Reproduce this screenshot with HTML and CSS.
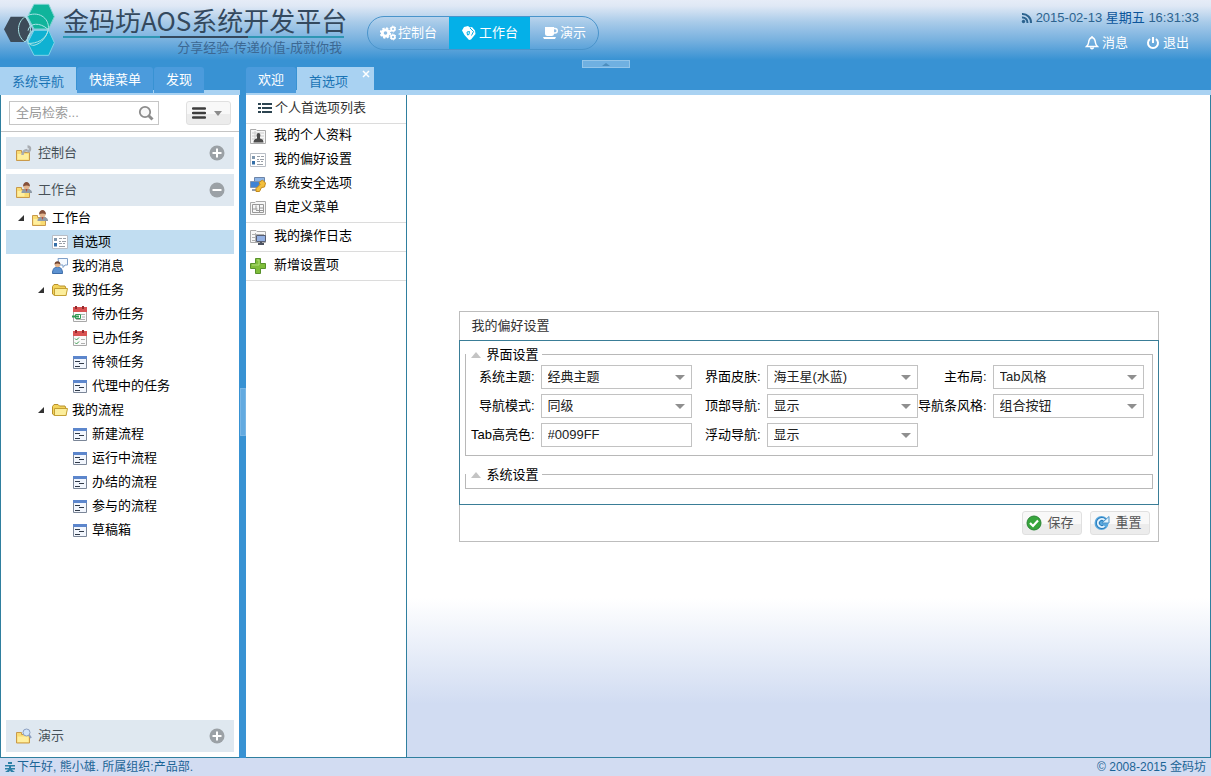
FILE: index.html
```html
<!DOCTYPE html>
<html lang="zh-CN">
<head>
<meta charset="utf-8">
<title>金码坊AOS系统开发平台</title>
<link rel="stylesheet" href="styles.css">
</head>
<body>
<svg class="sprite" aria-hidden="true">
  <symbol id="i-folder" viewBox="0 0 16 16">
    <path d="M.5 4.500 2 2.500H6l1.500 1.500H13L14 6.500 14 13.500H2.500L.5 12z" fill="#f3d35a" stroke="#b8912c"/>
    <path d="M2.500 6.500h13L14 13.500H2.500z" fill="#fcee9c" stroke="#c4a034"/>
  </symbol>
  <symbol id="i-box-wrench" viewBox="0 0 16 16">
    <path d="M.5 5.500h5v2h8v8H.5z" fill="#f9dc73" stroke="#c99a4b"/>
    <path d="M1.500 9h11v5.500h-11z" fill="#ffef9e"/>
    <path d="M6.500 10c0-3 2-5 5-5M11.500 1.500a2.500 2.500 0 1 1 0 5" fill="none" stroke="#a9adb2" stroke-width="2.500"/>
  </symbol>
  <symbol id="i-box-user" viewBox="0 0 16 16">
    <path d="M.5 5.500h5v2h8v8H.5z" fill="#f9dc73" stroke="#c99a4b"/>
    <path d="M1.500 9h7v5.500h-7z" fill="#ffef9e"/>
    <path d="M5.500 11c0-3 1.500-4 5-4s5.500 1 5.500 4z" fill="#8f9aa6"/>
    <circle cx="10.500" cy="4.500" r="3" fill="#e2b48c"/>
    <path d="M7 4.500c0-6 7-6 7 0-2-1.500-4.500-1.500-7 0z" fill="#85503a"/>
    <path d="m9.500 7 1 3 1-3z" fill="#b84e3c"/>
  </symbol>
  <symbol id="i-box-search" viewBox="0 0 16 16">
    <path d="M.5 4.500h5v2h8v8.500H.5z" fill="#f9dc73" stroke="#c99a4b"/>
    <path d="M1.500 8.500h11V14h-11z" fill="#ffef9e"/>
    <circle cx="10.500" cy="4.500" r="3.500" fill="#cfe4fa" stroke="#8c9fc0"/>
    <path d="m13 7 2 3" stroke="#8c9fc0" stroke-width="2"/>
  </symbol>
  <symbol id="i-prefs" viewBox="0 0 16 16">
    <path d="M.5 1.500h15v13H.5z" fill="#fff" stroke="#b9bec6"/>
    <path d="M2 4h3v3H2z" fill="#7e96ad"/><path d="M2 9h3v3.500H2z" fill="#356fa8"/>
    <path d="M7 4.500h3M11 4.500h3M7 7.500h2M10 7.500h4M7 9.500h3M11 9.500h2M7 12.500h6" stroke="#9aa0a8"/>
  </symbol>
  <symbol id="i-message" viewBox="0 0 16 16">
    <path d="M6 .5h9.500v6.500H13l-2 2.500V7H7z" fill="#f5faff" stroke="#7f9fc8"/>
    <path d="M.5 15.500c0-4 1.500-6.500 5-6.500s5 2.500 5 6.500z" fill="#5d92d1" stroke="#3c6ca8"/>
    <circle cx="5.500" cy="6.500" r="2.700" fill="#e5b58c"/>
    <path d="M2.500 6.500c0-4.500 6-4.500 6 0-2-1.500-4-1.500-6 0z" fill="#704431"/>
  </symbol>
  <symbol id="i-cal-todo" viewBox="0 0 16 16">
    <path d="M1.500 1.500h13v14h-13z" fill="#fafafa" stroke="#a8a8a8"/>
    <path d="M1 1h14v5H1z" fill="#d95353"/><path d="M4 0v3M11 0v3" stroke="#94292d" stroke-width="2"/>
    <path d="M9 8.500h4M10 11h3M4 13.500h9" stroke="#b0b0b0"/>
    <path d="M3.500 8.500h5v4h-5z" fill="#fff" stroke="#319a55"/><path d="M0 10.500h7" stroke="#319a55" stroke-width="2"/>
  </symbol>
  <symbol id="i-cal-done" viewBox="0 0 16 16">
    <path d="M1.500 1.500h13v14h-13z" fill="#fafafa" stroke="#a8a8a8"/>
    <path d="M1 1h14v5H1z" fill="#d95353"/><path d="M4 0v3M11 0v3" stroke="#94292d" stroke-width="2"/>
    <path d="m3 8.500 1.500 1.500L7 7.500M3 12.500 4.500 14 7 11.500" fill="none" stroke="#379a4c"/>
    <path d="M9 9.500h4M9 13.500h4" stroke="#b0b0b0"/>
  </symbol>
  <symbol id="i-form" viewBox="0 0 16 16">
    <path d="M1.500 2.500h13v12h-13z" fill="#f2f6fd" stroke="#7b8698"/>
    <path d="M1 2h14v3H1z" fill="#5c86cc"/>
    <path d="M3 7.500h5M7 9.500h5M3 12.500h5" stroke="#303a48"/>
  </symbol>
  <symbol id="i-profile" viewBox="0 0 16 16">
    <path d="M.5 1.500H6l1 1h8.500v13H.5z" fill="#f7f7f7" stroke="#aaa"/>
    <path d="M2 5h12M2 8h12M2 11h12M5 3v11" stroke="#ccc"/>
    <path d="M3.500 14.500c0-3 2-3.500 3.500-4V9c-2-5.500 5-5.500 3 0v1.500c2 .5 3.500 1 3.500 4z" fill="#4b4b4b"/>
  </symbol>
  <symbol id="i-security" viewBox="0 0 16 16">
    <path d="M4.500 1.500h10v8h-10z" fill="#8fb6e8" stroke="#6d84a6"/>
    <path d="M.5 5.500h9v6h-9z" fill="#3f83d4" stroke="#8094b0"/><path d="M2 14h6" stroke="#929cad" stroke-width="2"/>
    <path d="M6 15.500v-3l4-4-1-2 3.500-2.500 3 3-1 4-3 .5-2 4z" fill="#f3bf3c" stroke="#c38a1d"/>
  </symbol>
  <symbol id="i-custom" viewBox="0 0 16 16">
    <path d="M.5 2.500H5l1-1h9.500v13H.5z" fill="#f7f7f7" stroke="#aaa"/>
    <path d="M2.500 4.500h11v8h-11zM2.500 9h5M6 5.500v4M9.500 5v7M9.500 8h4M6 10.500h7" fill="none" stroke="#989898"/>
  </symbol>
  <symbol id="i-log" viewBox="0 0 16 16">
    <path d="M.5 1.500H6l1 1h8.500v11H.5z" fill="#f7f7f7" stroke="#aaa"/>
    <path d="M2 5.500h12M2 8.500h5M2 11.500h5M5.500 4v9" stroke="#b0b0b0"/>
    <path d="M6.500 6.500h9v6h-9z" fill="#93b0e2" stroke="#575d70"/><path d="M11 13v2M8 15h6" stroke="#4e5361" stroke-width="2"/>
  </symbol>
  <symbol id="i-add" viewBox="0 0 16 16">
    <path d="M5.500.5h5v5h5v5h-5v5h-5v-5h-5v-5h5z" fill="#7fbd3a" stroke="#58912b"/>
    <path d="M7 2h2v5H2" fill="none" stroke="#b2dd78"/>
  </symbol>
  <symbol id="i-plus" viewBox="0 0 16 16">
    <circle cx="8" cy="8" r="7.500" fill="#9ba1a6"/><path d="M8 3.500v9M3.500 8h9" stroke="#fff" stroke-width="2"/>
  </symbol>
  <symbol id="i-minus" viewBox="0 0 16 16">
    <circle cx="8" cy="8" r="7.500" fill="#9ba1a6"/><path d="M3.500 8h9" stroke="#fff" stroke-width="2"/>
  </symbol>
  <symbol id="i-expanded" viewBox="0 0 16 16"><path d="M8 5v6H2z" fill="#333"/></symbol>
  <symbol id="i-cogs" viewBox="0 0 16 16">
    <g fill="none" stroke="#fff">
      <circle cx="5.500" cy="8" r="3.200" stroke-width="2.800"/>
      <circle cx="5.500" cy="8" r="4.800" stroke-width="1.800" stroke-dasharray="2.200 1.570"/>
      <circle cx="13" cy="4" r="1.900" stroke-width="1.800"/>
      <circle cx="13" cy="4" r="2.900" stroke-width="1" stroke-dasharray="1.500 1.540"/>
      <circle cx="13" cy="12" r="1.900" stroke-width="1.800"/>
      <circle cx="13" cy="12" r="2.900" stroke-width="1" stroke-dasharray="1.500 1.540"/>
    </g>
  </symbol>
  <symbol id="i-tags" viewBox="0 0 16 16">
    <path d="M1 5.500 3 2l4-1 2 1.500 2-.5 3 3.500.5 3.500-4.500 5.500-2 .5-4.500-5z" fill="#fff"/>
    <path d="m6 7 2.500-.5L8 9.500 6.500 10zM9 3l3.500 3.500-2 4" fill="none" stroke="#04b0e8"/>
  </symbol>
  <symbol id="i-cup" viewBox="0 0 16 16">
    <path d="M3 2h9v6.500A2.500 2.500 0 0 1 9.500 11h-4A2.500 2.500 0 0 1 3 8.500zM1 12h13l-1 2H2z" fill="#fff"/>
    <path d="M12 3.500h1a2.200 2.200 0 0 1 0 4.500h-1" fill="none" stroke="#fff" stroke-width="1.500"/>
  </symbol>
  <symbol id="i-rss" viewBox="0 0 12 12">
    <circle cx="2.500" cy="9.500" r="1.700" fill="currentColor"/>
    <path d="M1 5.500A5 5 0 0 1 6.500 11M1 2a8.500 8.500 0 0 1 9 9" fill="none" stroke="currentColor" stroke-width="2"/>
  </symbol>
  <symbol id="i-bell" viewBox="0 0 14 14">
    <path d="M7 1.500C4 2 3.800 4.500 3.500 7 3.300 8.500 2.500 9.500 1.500 10.500h11C11.500 9.500 10.700 8.500 10.500 7 10.200 4.500 10 2 7 1.500zM7 0v2M5.500 11.500c.5 1.500 2.500 1.500 3 0" fill="none" stroke="currentColor" stroke-width="1.500"/>
  </symbol>
  <symbol id="i-power" viewBox="0 0 14 14">
    <path d="M4 3a5 5 0 1 0 6 0M7 1v6" fill="none" stroke="currentColor" stroke-width="2"/>
  </symbol>
  <symbol id="i-search" viewBox="0 0 16 16">
    <circle cx="7" cy="7" r="5.200" fill="#f8f8f8" stroke="#8c8c8c" stroke-width="1.800"/><path d="m10.500 10.500 4 4" stroke="#8c8c8c" stroke-width="3"/>
  </symbol>
  <symbol id="i-bars" viewBox="0 0 14 14"><path d="M1 2.500h12M1 7h12M1 11.500h12" stroke="#3d3d3d" stroke-width="2.500" stroke-linecap="round"/></symbol>
  <symbol id="i-list" viewBox="0 0 14 12">
    <path d="M0 2h3M0 6h3M0 10h3M4 2h10M4 6h10M4 10h10" stroke="#2c4450" stroke-width="2"/>
  </symbol>
  <symbol id="i-close" viewBox="0 0 8 8"><path d="m1 1 6 6M7 1 1 7" stroke="#fff" stroke-width="1.500"/></symbol>
  <symbol id="i-ok" viewBox="0 0 16 16">
    <circle cx="8" cy="8" r="7" fill="#37a53c" stroke="#2a8434"/><path d="M4 8l3 3 5-5.500" fill="none" stroke="#fff" stroke-width="2.200"/>
  </symbol>
  <symbol id="i-reset" viewBox="0 0 16 16">
    <circle cx="7.500" cy="8" r="7" fill="#5aa9de"/>
    <path d="M10.500 11a4 4 0 1 1 0-6" fill="none" stroke="#2a7dbd" stroke-width="4"/>
    <path d="M10.500 11a4 4 0 1 1 0-6" fill="none" stroke="#e3f4fe" stroke-width="2"/>
    <path d="M8 8h7V1.500z" fill="#e3f4fe" stroke="#4b94c9"/>
  </symbol>
  <symbol id="i-person" viewBox="0 0 12 12">
    <path d="M4 1h4v2H4zM1 4h10v1.500H7V7h4v1.500H7.500L11 11H7L6 9.500 5 11H1l3.500-2.500H1V7h4V5.500H1z" fill="#2b7fa5"/>
  </symbol>
</svg>

<div class="app">
  <header class="top">
    <div class="brand">
      <svg class="logo" viewBox="0 0 180 180" aria-hidden="true">
        <path d="M83 50l19-37h44l17 37-17 37h-44z" fill="#10b49b" stroke="#7ed3d2" stroke-width="3"/>
        <path d="M83 128l19-37h44l17 37-17 38h-44z" fill="#0fb1d2" stroke="#7ed3e8" stroke-width="3"/>
        <path d="M12 88l20-38h43l22 38-22 38H32z" fill="#3d4b59"/>
        <path d="M75 50c-26 18-26 58 0 76M75 50c22 22 22 54 0 76M83 46c40-14 66 14 62 42-4 30-36 44-62 42M100 92c-24 14-24 44 2 44 24-6 36-26 42-44M84 92c4-24 36-26 60-4" fill="none" stroke="#a9e4e6" stroke-width="3"/>
      </svg>
      <div class="brand-text">
        <h1 class="brand-title">金码坊AOS系统开发平台</h1>
        <p class="brand-sub">分享经验-传递价值-成就你我</p>
      </div>
    </div>
    <nav class="modes">
      <button class="mode" type="button"><svg class="icon"><use href="#i-cogs"/></svg>控制台</button>
      <button class="mode mode-on" type="button"><svg class="icon"><use href="#i-tags"/></svg>工作台</button>
      <button class="mode" type="button"><svg class="icon"><use href="#i-cup"/></svg>演示</button>
    </nav>
    <div class="session">
      <p class="clock"><svg class="icon-sm"><use href="#i-rss"/></svg><span>2015-02-13 <b class="weekday">星期五</b> 16:31:33</span></p>
      <div class="session-links">
        <a class="session-link" href="#messages"><svg class="icon-md"><use href="#i-bell"/></svg>消息</a>
        <a class="session-link" href="#logout"><svg class="icon-md"><use href="#i-power"/></svg>退出</a>
      </div>
    </div>
    <button class="fold-top" type="button" aria-label="收起顶部"></button>
  </header>

  <div class="main">
    <aside class="side">
      <div class="tabs">
        <button class="tab tab-on" type="button">系统导航</button>
        <button class="tab" type="button">快捷菜单</button>
        <button class="tab" type="button">发现</button>
      </div>
      <div class="side-panel">
        <div class="tools">
          <div class="search">
            <input class="search-input" type="text" placeholder="全局检索..." aria-label="全局检索">
            <svg class="icon"><use href="#i-search"/></svg>
          </div>
          <button class="btn menu-btn" type="button" aria-label="菜单"><svg class="icon-md"><use href="#i-bars"/></svg><span class="caret"></span></button>
        </div>
        <div class="accordion">
          <button class="acc" type="button"><svg class="icon"><use href="#i-box-wrench"/></svg><span class="acc-name">控制台</span><svg class="icon"><use href="#i-plus"/></svg></button>
          <div class="acc-open">
            <button class="acc" type="button"><svg class="icon"><use href="#i-box-user"/></svg><span class="acc-name">工作台</span><svg class="icon"><use href="#i-minus"/></svg></button>
            <ul class="tree">
              <li><a class="node" href="#w"><svg class="icon"><use href="#i-expanded"/></svg><svg class="icon"><use href="#i-box-user"/></svg><span class="node-name">工作台</span></a></li>
              <li><a class="node leaf2 node-on" href="#w1"><svg class="icon"><use href="#i-prefs"/></svg><span class="node-name">首选项</span></a></li>
              <li><a class="node leaf2" href="#w2"><svg class="icon"><use href="#i-message"/></svg><span class="node-name">我的消息</span></a></li>
              <li><a class="node branch2" href="#t"><svg class="icon"><use href="#i-expanded"/></svg><svg class="icon"><use href="#i-folder"/></svg><span class="node-name">我的任务</span></a></li>
              <li><a class="node leaf3" href="#t1"><svg class="icon"><use href="#i-cal-todo"/></svg><span class="node-name">待办任务</span></a></li>
              <li><a class="node leaf3" href="#t2"><svg class="icon"><use href="#i-cal-done"/></svg><span class="node-name">已办任务</span></a></li>
              <li><a class="node leaf3" href="#t3"><svg class="icon"><use href="#i-form"/></svg><span class="node-name">待领任务</span></a></li>
              <li><a class="node leaf3" href="#t4"><svg class="icon"><use href="#i-form"/></svg><span class="node-name">代理中的任务</span></a></li>
              <li><a class="node branch2" href="#p"><svg class="icon"><use href="#i-expanded"/></svg><svg class="icon"><use href="#i-folder"/></svg><span class="node-name">我的流程</span></a></li>
              <li><a class="node leaf3" href="#p1"><svg class="icon"><use href="#i-form"/></svg><span class="node-name">新建流程</span></a></li>
              <li><a class="node leaf3" href="#p2"><svg class="icon"><use href="#i-form"/></svg><span class="node-name">运行中流程</span></a></li>
              <li><a class="node leaf3" href="#p3"><svg class="icon"><use href="#i-form"/></svg><span class="node-name">办结的流程</span></a></li>
              <li><a class="node leaf3" href="#p4"><svg class="icon"><use href="#i-form"/></svg><span class="node-name">参与的流程</span></a></li>
              <li><a class="node leaf3" href="#p5"><svg class="icon"><use href="#i-form"/></svg><span class="node-name">草稿箱</span></a></li>
            </ul>
          </div>
          <button class="acc" type="button"><svg class="icon"><use href="#i-box-search"/></svg><span class="acc-name">演示</span><svg class="icon"><use href="#i-plus"/></svg></button>
        </div>
      </div>
    </aside>

    <div class="splitter"><button class="split-grip" type="button" aria-label="收起导航"></button></div>

    <main class="work">
      <div class="tabs">
        <button class="tab" type="button">欢迎</button>
        <button class="tab tab-on tab-closable" type="button">首选项<svg class="tab-x"><use href="#i-close"/></svg></button>
      </div>
      <div class="work-body">
        <nav class="prefs">
          <h2 class="prefs-head"><svg class="icon-list"><use href="#i-list"/></svg>个人首选项列表</h2>
          <div class="group">
            <a class="item" href="#profile"><svg class="icon"><use href="#i-profile"/></svg><span>我的个人资料</span></a>
            <a class="item" href="#preference"><svg class="icon"><use href="#i-prefs"/></svg><span>我的偏好设置</span></a>
            <a class="item" href="#security"><svg class="icon"><use href="#i-security"/></svg><span>系统安全选项</span></a>
            <a class="item" href="#custom"><svg class="icon"><use href="#i-custom"/></svg><span>自定义菜单</span></a>
          </div>
          <div class="group"><a class="item" href="#log"><svg class="icon"><use href="#i-log"/></svg><span>我的操作日志</span></a></div>
          <div class="group"><a class="item" href="#add"><svg class="icon"><use href="#i-add"/></svg><span>新增设置项</span></a></div>
        </nav>
        <section class="canvas">
          <form class="form">
            <h2 class="form-head">我的偏好设置</h2>
            <div class="form-body">
              <fieldset class="set">
                <legend class="set-name"><span class="caret-up"></span>界面设置</legend>
                <div class="fields">
                  <label class="label" for="f1">系统主题:</label><div class="pick"><select class="control" id="f1"><option>经典主题</option></select></div>
                  <label class="label" for="f2">界面皮肤:</label><div class="pick"><select class="control" id="f2"><option>海王星(水蓝)</option></select></div>
                  <label class="label" for="f3">主布局:</label><div class="pick"><select class="control" id="f3"><option>Tab风格</option></select></div>
                  <label class="label" for="f4">导航模式:</label><div class="pick"><select class="control" id="f4"><option>同级</option></select></div>
                  <label class="label" for="f5">顶部导航:</label><div class="pick"><select class="control" id="f5"><option>显示</option></select></div>
                  <label class="label" for="f6">导航条风格:</label><div class="pick"><select class="control" id="f6"><option>组合按钮</option></select></div>
                  <label class="label" for="f7">Tab高亮色:</label><input class="control" id="f7" type="text" value="#0099FF">
                  <label class="label" for="f8">浮动导航:</label><div class="pick"><select class="control" id="f8"><option>显示</option></select></div>
                </div>
              </fieldset>
              <fieldset class="set set-empty">
                <legend class="set-name"><span class="caret-up"></span>系统设置</legend>
              </fieldset>
            </div>
            <div class="form-foot">
              <button class="btn" type="button"><svg class="icon"><use href="#i-ok"/></svg>保存</button>
              <button class="btn" type="button"><svg class="icon"><use href="#i-reset"/></svg>重置</button>
            </div>
          </form>
        </section>
      </div>
    </main>
  </div>

  <footer class="status">
    <span class="status-user"><svg class="icon-sm"><use href="#i-person"/></svg>下午好, 熊小雄. 所属组织:产品部.</span>
    <span>© 2008-2015 金码坊</span>
  </footer>
</div>
</body>
</html>
```

FILE: styles.css
```css
:root {
  --blue: #3892d3;
  --pale: #a9d2f2;
  --line: #2f7f9f;
}

* { box-sizing: border-box; }

body {
  margin: 0;
  color: #000;
  font: 13px/18px "Liberation Sans", "Noto Sans CJK SC", sans-serif;
}

button, input, select { font: inherit; color: inherit; margin: 0; border-radius: 0; }
button { padding: 0; border: 0; background: none; cursor: pointer; }
h1, h2, p, ul { margin: 0; padding: 0; font-weight: normal; }
ul { list-style: none; }
a { color: inherit; text-decoration: none; }
svg { flex: none; }

.sprite { display: none; }
.icon { width: 16px; height: 16px; }
.icon-md { width: 14px; height: 14px; }
.icon-sm { width: 12px; height: 12px; }

.app { display: flex; flex-direction: column; height: 100vh; background: var(--blue); }

/* header */
.top {
  position: relative;
  display: flex;
  flex: none;
  height: 66px;
  background: linear-gradient(#e6ecf7 0, #dfe8f5 6px, #a9cbe9 22px, #78b1df 40px, var(--blue) 60px);
}
.brand { display: flex; width: 367px; gap: 3px; }
.logo { width: 60px; height: 60px; }
.brand-text { width: 281px; padding-top: 4px; }
.brand-title {
  font: 26px/32px "Noto Sans CJK SC", sans-serif;
  white-space: nowrap;
  color: #34495e;
  border-bottom: 2px solid;
  border-image: linear-gradient(90deg, #2e96b4 97px, #34495e 97px, #34495e 185px, #2e96b4 185px) 1;
}
.brand-sub { padding-right: 2px; text-align: right; color: #3c6893; line-height: 20px; white-space: nowrap; }

.modes {
  display: flex;
  align-self: flex-start;
  height: 34px;
  margin-top: 16px;
  border: 1px solid #4a94cb;
  border-radius: 17px;
  overflow: hidden;
}
.mode { display: flex; align-items: center; gap: 2px; padding: 0 12px; color: #fff; }
.mode-on { background: #04b0e8; }

.session { margin-left: auto; padding: 9px 12px 0 0; color: #2c638f; }
.clock { display: flex; align-items: center; gap: 3px; }
.weekday { font-weight: normal; color: #0b559b; }
.session-links { display: flex; justify-content: flex-end; gap: 18px; padding: 7px 10px 0 0; color: #fff; }
.session-link { display: flex; align-items: center; gap: 3px; }

.fold-top {
  position: absolute;
  left: 50%;
  bottom: -2px;
  width: 48px;
  height: 8px;
  transform: translateX(-50%);
  background: #6fb0e1;
  border: 1px solid #93c5ea;
}
.fold-top::after {
  content: "";
  display: block;
  width: 0;
  margin: auto;
  border: 4px solid transparent;
  border-width: 0 4px 3px;
  border-bottom-color: #4c8dbd;
}

/* tabs */
.main { display: flex; flex: 1; min-height: 0; }
.tabs {
  display: flex;
  flex: none;
  gap: 1px;
  height: 29px;
  padding-top: 1px;
  background: linear-gradient(var(--blue) 24px, var(--pale) 24px);
}
.tab { height: 26px; padding: 0 12px; color: #fff; background: #4b9bdc; border-radius: 3px 3px 0 0; }
.tab-on { height: 28px; padding-top: 2px; color: #1a74b5; background: var(--pale); border-radius: 0; }
.tab-closable { display: flex; align-items: center; gap: 14px; padding-right: 4px; }
.tab-x { width: 8px; height: 8px; margin-bottom: 16px; }

/* sidebar */
.side { display: flex; flex-direction: column; width: 240px; }
.side-panel {
  display: flex;
  flex: 1;
  flex-direction: column;
  min-height: 0;
  background: #fff;
  border: 1px solid var(--line);
  border-top: 0;
  border-right-color: var(--blue);
}
.tools {
  display: flex;
  justify-content: space-between;
  padding: 6px 8px;
  border-bottom: 1px solid #c4c4c4;
}
.search { display: flex; align-items: center; width: 150px; height: 24px; padding: 0 4px 0 6px; border: 1px solid #c6c6c6; }
.search-input { flex: 1; min-width: 0; padding: 0; border: 0; outline: 0; background: none; }
.search-input::placeholder { color: #9a9a9a; opacity: 1; }

.btn {
  display: flex;
  align-items: center;
  justify-content: center;
  gap: 5px;
  width: 60px;
  height: 24px;
  padding-right: 3px;
  color: #555;
  background: linear-gradient(#f8f8f8 55%, #ececec 55%);
  border: 1px solid #e0e0e0;
  border-radius: 3px;
}
.menu-btn { width: 45px; gap: 8px; }
.caret { border: 4px solid transparent; border-width: 5px 4px 0; border-top-color: #8b8b8b; }

.accordion { display: flex; flex: 1; flex-direction: column; gap: 5px; min-height: 0; padding: 5px; }
.acc {
  display: flex;
  flex: none;
  align-items: center;
  width: 100%;
  height: 32px;
  padding: 0 9px 0 10px;
  gap: 6px;
  color: #475158;
  background: #dfe8f0;
}
.acc-name { flex: 1; text-align: left; }
.acc-open { flex: 1; min-height: 0; overflow: hidden; }
.node { display: flex; align-items: center; height: 24px; padding-left: 10px; }
.node-name { padding-left: 4px; }
.node-on { background: #c1ddf1; }
.branch2 { padding-left: 30px; }
.leaf2 { padding-left: 46px; }
.leaf3 { padding-left: 66px; }

.splitter { display: flex; align-items: center; width: 6px; }
.split-grip {
  width: 6px;
  height: 48px;
  background: #63aae0;
  border: 1px solid #79b6e5;
}

/* work area */
.work { display: flex; flex: 1; flex-direction: column; min-width: 0; }
.work-body { display: flex; flex: 1; min-height: 0; border-right: 1px solid var(--line); border-bottom: 1px solid var(--line); background: #fff; }
.prefs { width: 161px; border-right: 1px solid var(--line); }
.prefs-head {
  display: flex;
  align-items: center;
  gap: 3px;
  height: 29px;
  padding: 0 12px 2px;
  font-size: 13px;
  color: #333;
  border-bottom: 1px solid #dcdcdc;
}
.icon-list { width: 14px; height: 12px; }
.group { padding-bottom: 2px; border-bottom: 1px solid #dcdcdc; }
.group + .group { padding-top: 2px; }
.item { display: flex; align-items: center; gap: 8px; height: 24px; padding-left: 4px; }
.item span { padding-bottom: 2px; }

.canvas {
  display: flex;
  flex: 1;
  align-items: center;
  justify-content: center;
  min-width: 0;
  background: linear-gradient(#fff 0, #fff 76%, #d1dcf2 92%);
}

/* form */
.form { width: 100%; max-width: 700px; background: #fff; }
.form-head { padding: 5px 12px; font-size: 13px; line-height: 18px; color: #333; border: 1px solid #bdbdbd; border-bottom: 0; }
.form-body { padding: 5px 5px 15px; border: 1px solid #3a7d97; }
.set { min-width: 0; margin: 0; padding: 1px 8px 8px 0; border: 1px solid #b8b8b8; }
.set-empty { margin-top: 10px; padding: 4px 0 0; }
.set-name { display: flex; align-items: center; gap: 6px; height: 18px; padding: 0 3px 0 5px; }
.caret-up { border: 5px solid transparent; border-width: 0 5px 6px; border-bottom-color: #c4c4c4; }
.fields {
  display: grid;
  grid-template-columns: repeat(3, 75px minmax(0, 1fr));
  row-gap: 5px;
}
.label { align-self: center; padding-right: 6px; text-align: right; white-space: nowrap; }
.pick { position: relative; }
.control {
  display: block;
  width: 100%;
  height: 24px;
  padding: 0 6px;
  color: #222;
  background: #fff;
  border: 1px solid #c2c2c2;
  appearance: none;
}
.pick::after {
  content: "";
  position: absolute;
  top: 10px;
  right: 7px;
  border: 5px solid transparent;
  border-width: 5px 5px 0;
  border-top-color: #8f8f8f;
  pointer-events: none;
}
.form-foot { display: flex; justify-content: flex-end; gap: 8px; padding: 6px 8px; border: 1px solid #bdbdbd; border-top: 0; }

/* status bar */
.status {
  display: flex;
  flex: none;
  justify-content: space-between;
  align-items: center;
  height: 18px;
  padding: 0 5px 0 4px;
  font-size: 12px;
  line-height: 18px;
  color: #1b6496;
  background: #d2dcf2;
}
.status-user { display: flex; align-items: center; gap: 1px; }
```
